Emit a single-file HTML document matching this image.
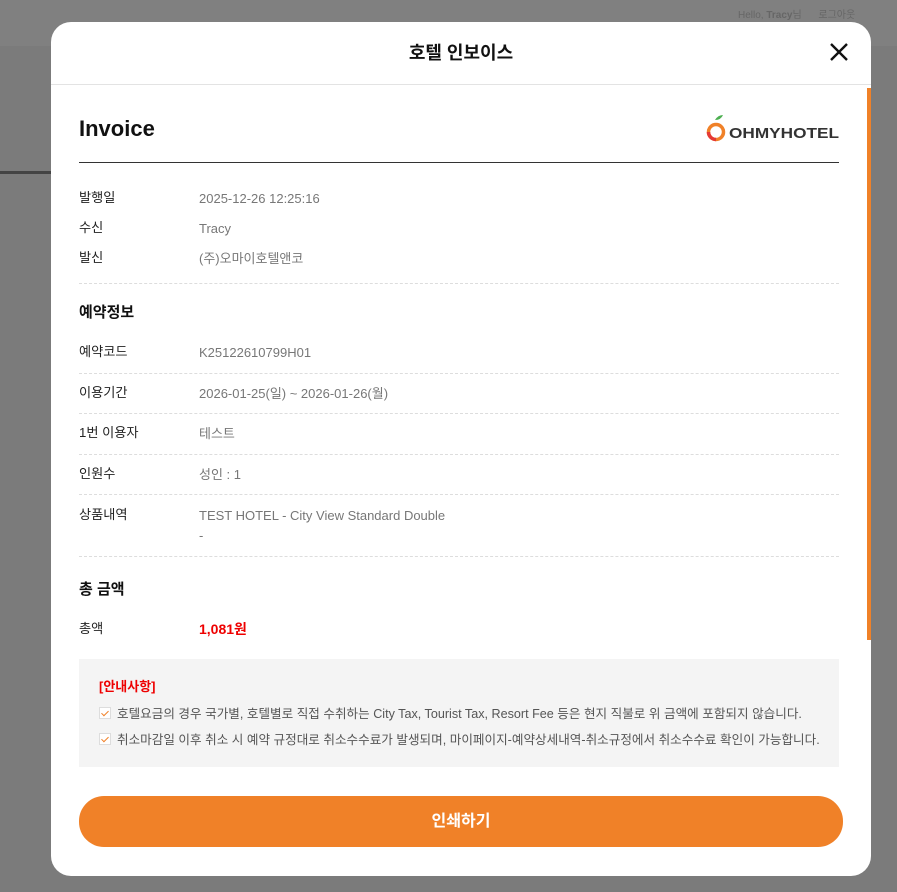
<!DOCTYPE html>
<html><head><meta charset="utf-8"><style>
*{margin:0;padding:0;box-sizing:border-box}
body{width:897px;height:892px;overflow:hidden;background:#7b7b7b;font-family:"Liberation Sans","Noto Sans CJK KR",sans-serif;position:relative}
.topbar{position:absolute;left:0;top:0;width:897px;height:46px;background:#808080}
.hello{position:absolute;left:738px;top:6px;font-size:10px;color:#666}
.dk{position:absolute;left:0;top:171px;width:60px;height:3px;background:#444}
.modal{position:absolute;left:51px;top:22px;width:820px;height:854px;background:#fff;border-radius:20px;overflow:hidden}
.hd{height:63px;border-bottom:1px solid #e3e3e3;text-align:center;font-size:18px;font-weight:bold;line-height:62px;color:#111}
.x{position:absolute;right:22px;top:20px}
.sb{position:absolute;left:816px;top:66px;width:4px;height:552px;background:#f08128}
.t{position:absolute;font-size:13.2px;color:#222;line-height:20px}
.v{position:absolute;font-size:13px;color:#777;left:148px;line-height:20px;top:1px}
.ln{position:absolute;left:28px;width:760px;border-top:1px dashed #ddd}
.h{position:absolute;left:28px;font-size:15px;font-weight:bold;color:#111;line-height:20px}
.box{position:absolute;left:28px;top:637px;width:760px;height:108px;background:#f4f4f4}
.n{position:absolute;left:20px;font-size:12.6px;color:#555;white-space:nowrap;line-height:18px}
.ck{display:inline-block;width:12px;height:12px;border:1px solid #ddd;background:#fff;vertical-align:-1px;margin-right:6px;position:relative}
.ck:after{content:"";position:absolute;left:3px;top:1px;width:3px;height:6px;border:solid #f08128;border-width:0 1.5px 1.5px 0;transform:rotate(45deg)}
.btn{position:absolute;left:28px;top:774px;width:764px;height:51px;background:#f08128;border-radius:25px;color:#fff;font-size:16px;font-weight:bold;text-align:center;line-height:51px}
</style></head><body>
<div class="topbar"></div>
<div class="hello">Hello, <b>Tracy</b>님 &nbsp;&nbsp;&nbsp;&nbsp; 로그아웃</div>
<div class="dk"></div>
<div class="modal">
<div class="hd">호텔 인보이스</div>
<svg class="x" width="20" height="20" viewBox="0 0 20 20"><path d="M2 2L18 18M18 2L2 18" stroke="#111" stroke-width="2.4"/></svg>
<div class="sb"></div>
<div class="t" style="left:28px;top:94px;font-size:22px;font-weight:bold;color:#111;line-height:26px">Invoice</div>
<svg style="position:absolute;left:654px;top:90px" width="136" height="32" viewBox="0 0 136 32">
<path d="M10 8 q3-5 8-5 q-2 5-8 5z" fill="#4caf50"/>
<circle cx="11" cy="20" r="7.5" fill="none" stroke="#f08128" stroke-width="3.5"/>
<path d="M3.5 20 a7.5 7.5 0 0 0 7.5 7.5" fill="none" stroke="#e53935" stroke-width="3.5"/>
<text x="24" y="26" font-family="Liberation Sans" font-weight="bold" font-size="15" fill="#333" textLength="110" lengthAdjust="spacingAndGlyphs">OHMYHOTEL</text>
</svg>
<div style="position:absolute;left:28px;top:140px;width:760px;border-top:1px solid #333"></div>
<div class="t" style="left:28px;top:166px">발행일</div><div class="v" style="top:167px">2025-12-26 12:25:16</div>
<div class="t" style="left:28px;top:196px">수신</div><div class="v" style="top:197px">Tracy</div>
<div class="t" style="left:28px;top:226px">발신</div><div class="v" style="top:227px">(주)오마이호텔앤코</div>
<div class="ln" style="top:261px"></div>
<div class="h" style="top:281px">예약정보</div>
<div class="t" style="left:28px;top:320px">예약코드</div><div class="v" style="top:321px">K25122610799H01</div>
<div class="ln" style="top:351px"></div>
<div class="t" style="left:28px;top:361px">이용기간</div><div class="v" style="top:362px">2026-01-25(일) ~ 2026-01-26(월)</div>
<div class="ln" style="top:391px"></div>
<div class="t" style="left:28px;top:401px">1번 이용자</div><div class="v" style="top:402px">테스트</div>
<div class="ln" style="top:432px"></div>
<div class="t" style="left:28px;top:442px">인원수</div><div class="v" style="top:443px">성인 : 1</div>
<div class="ln" style="top:472px"></div>
<div class="t" style="left:28px;top:483px">상품내역</div><div class="v" style="top:484px">TEST HOTEL - City View Standard Double<br>-</div>
<div class="ln" style="top:534px"></div>
<div class="h" style="top:558px">총 금액</div>
<div class="t" style="left:28px;top:597px">총액</div><div class="v" style="top:597px;color:#e00;font-weight:bold;font-size:14px">1,081원</div>
<div class="box">
<div class="n" style="top:19px;color:#e00;font-weight:bold;font-size:13px">[안내사항]</div>
<div class="n" style="top:46px"><span class="ck"></span>호텔요금의 경우 국가별, 호텔별로 직접 수취하는 City Tax, Tourist Tax, Resort Fee 등은 현지 직불로 위 금액에 포함되지 않습니다.</div>
<div class="n" style="top:72px"><span class="ck"></span>취소마감일 이후 취소 시 예약 규정대로 취소수수료가 발생되며, 마이페이지-예약상세내역-취소규정에서 취소수수료 확인이 가능합니다.</div>
</div>
<div class="btn">인쇄하기</div>
</div>
</body></html>
